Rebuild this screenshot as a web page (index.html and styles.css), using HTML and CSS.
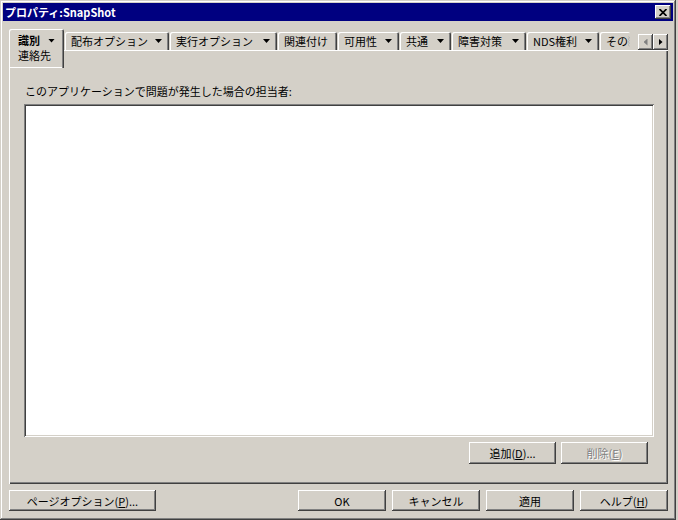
FILE: index.html
```html
<!DOCTYPE html>
<html lang="ja">
<head>
    <meta charset="UTF-8">
    <title>プロパティ:SnapShot</title>
    <link rel="stylesheet" href="styles.css">
</head>
<body>
    <div class="window">
        <div class="titlebar">
            <span class="title">プロパティ:SnapShot</span>
            <span class="close">
                <svg width="8" height="7" viewBox="0 0 8 7"><path d="M0.5 0L7.5 7M7.5 0L0.5 7" stroke="#000" stroke-width="1.7"/></svg>
            </span>
        </div>
        <div class="client">
            <div class="tabstrip">
                <div class="tab active">
                    <div class="tab-cat"><b>識別</b><i class="caret"></i></div>
                    <div class="tab-page">連絡先</div>
                </div>
                <div class="tab" style="width:104px">配布オプション<i class="caret"></i></div>
                <div class="tab" style="width:107px">実行オプション<i class="caret"></i></div>
                <div class="tab" style="width:59px">関連付け</div>
                <div class="tab" style="width:61px">可用性<i class="caret"></i></div>
                <div class="tab" style="width:51px">共通<i class="caret"></i></div>
                <div class="tab" style="width:74px">障害対策<i class="caret"></i></div>
                <div class="tab" style="width:72px">NDS権利<i class="caret"></i></div>
                <div class="tab cut" style="width:30px">
                    <span>その</span>
                    <svg class="torn" width="3" height="15" viewBox="0 0 3 15"><path d="M1 0L2 2L0.5 4L2 6L0.5 8L2 10L0.5 12L2 15" stroke="#a0a0a0" fill="none"/></svg>
                </div>
                <div class="scroller">
                    <span class="sbtn"><i class="arrow-left"></i></span>
                    <span class="sbtn"><i class="arrow-right"></i></span>
                </div>
            </div>
            <div class="panel">
                <div class="label">このアプリケーションで問題が発生した場合の担当者:</div>
                <div class="listbox"></div>
                <div class="panel-buttons">
                    <button class="btn">追加(<u>D</u>)...</button>
                    <button class="btn" disabled>削除(<u>E</u>)</button>
                </div>
            </div>
            <div class="footer">
                <button class="btn page-btn">ページオプション(<u>P</u>)...</button>
                <div class="spacer"></div>
                <button class="btn">OK</button>
                <button class="btn">キャンセル</button>
                <button class="btn">適用</button>
                <button class="btn">ヘルプ(<u>H</u>)</button>
            </div>
        </div>
    </div>
</body>
</html>
```

FILE: styles.css
```css
* {
  box-sizing: border-box;
}

html, body {
  margin: 0;
}

body {
  width: 678px;
  height: 520px;
  overflow: hidden;
  background: #d4d0c8;
  color: #000;
  font-family: "Noto Sans CJK JP", "DejaVu Sans", sans-serif;
  font-size: 11px;
}

.window {
  width: 676px;
  height: 520px;
  padding: 3px;
  display: flex;
  flex-direction: column;
  box-shadow: inset -1px -1px #404040, inset 1px 1px #d4d0c8,
    inset -2px -2px #808080, inset 2px 2px #fff;
}

.titlebar {
  height: 18px;
  background: #000080;
  color: #fff;
  display: flex;
  align-items: center;
  justify-content: space-between;
  padding: 0 2px;
  font-size: 11px;
  font-weight: bold;
}

.close {
  width: 16px;
  height: 14px;
  background: #d4d0c8;
  display: flex;
  align-items: center;
  justify-content: center;
  box-shadow: inset -1px -1px #404040, inset 1px 1px #fff,
    inset -2px -2px #808080;
}

.client {
  flex: 1;
  padding: 8px 5px 0 6px;
  display: flex;
  flex-direction: column;
}

/* tab row */
.tabstrip {
  height: 21px;
  display: flex;
  align-items: flex-start;
  gap: 1px;
}

.tab {
  height: 18px;
  margin-top: 3px;
  padding: 0 7px 0 6px;
  display: flex;
  align-items: center;
  justify-content: space-between;
  white-space: nowrap;
  line-height: 14px;
  border-radius: 2px 2px 0 0;
  box-shadow: inset 1px 1px #fff, inset -1px 0 #404040, inset -2px 0 #808080;
}

.tab.active {
  width: 55px;
  height: 39px;
  margin-top: 0;
  padding: 4px 0 0 9px;
  display: block;
  position: relative;
  z-index: 1;
  background: #d4d0c8;
  box-shadow: inset 1px 1px #fff, inset -1px 0 #404040, inset -2px 0 #808080,
    inset 0 -1px #fff;
}

.tab-cat {
  display: flex;
  align-items: center;
  height: 15px;
  line-height: 15px;
}

.tab-cat .caret {
  margin-left: 8px;
}

.tab-page {
  height: 15px;
  line-height: 15px;
}

.tab.cut {
  padding-right: 0;
  box-shadow: inset 1px 1px #fff;
}

.torn {
  display: block;
}

.caret {
  display: inline-block;
  width: 7px;
  height: 4px;
  background: #000;
  clip-path: polygon(0 0, 100% 0, 50% 100%);
}

.scroller {
  margin-left: auto;
  margin-top: 5px;
  display: flex;
}

.sbtn {
  width: 15px;
  height: 16px;
  display: flex;
  align-items: center;
  justify-content: center;
  box-shadow: inset -1px -1px #404040, inset 1px 1px #fff,
    inset -2px -2px #808080;
}

.arrow-left, .arrow-right {
  display: block;
  width: 4px;
  height: 7px;
}

.arrow-left {
  background: #808080;
  clip-path: polygon(100% 0, 100% 100%, 0 50%);
}

.arrow-right {
  background: #000;
  clip-path: polygon(0 0, 100% 50%, 0 100%);
}

/* page body */
.panel {
  height: 434px;
  padding: 34px 14px 0 15px;
  display: flex;
  flex-direction: column;
  box-shadow: inset 1px 1px #fff, inset -1px -1px #404040,
    inset -2px -2px #808080;
}

.label {
  height: 14px;
  line-height: 14px;
  padding-left: 1px;
}

.listbox {
  height: 333px;
  margin-top: 6px;
  background: #fff;
  box-shadow: inset 1px 1px #808080, inset -1px -1px #fff,
    inset 2px 2px #404040, inset -2px -2px #d4d0c8;
}

.panel-buttons {
  margin-top: 5px;
  padding-right: 6px;
  display: flex;
  justify-content: flex-end;
  gap: 5px;
}

.panel-buttons .btn {
  width: 87px;
  height: 22px;
}

.btn {
  width: 88px;
  height: 21px;
  padding: 0;
  border: 0;
  background: #d4d0c8;
  color: #000;
  font: inherit;
  display: flex;
  align-items: center;
  justify-content: center;
  box-shadow: inset -1px -1px #404040, inset 1px 1px #fff,
    inset -2px -2px #808080;
}

.btn:disabled {
  color: #808080;
  text-shadow: 1px 1px 0 #fff;
}

.footer {
  margin-top: 6px;
  display: flex;
  gap: 6px;
}

.page-btn {
  width: 147px;
}

.spacer {
  flex: 1;
}
```
